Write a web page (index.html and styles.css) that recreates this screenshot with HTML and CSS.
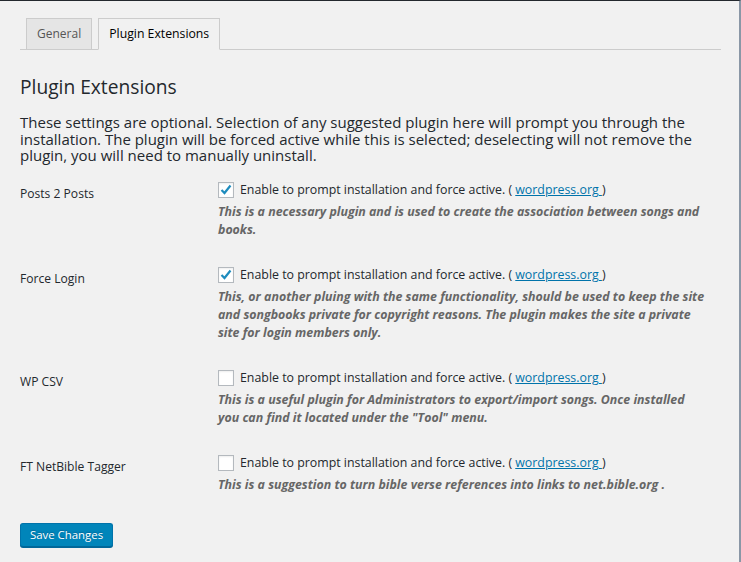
FILE: index.html
```html
<!DOCTYPE html>
<html lang="en">
<head>
<meta charset="utf-8">
<title>Plugin Extensions</title>
<link rel="stylesheet" href="styles.css">
</head>
<body>
<div class="wrap">
  <nav class="tabs">
    <a class="tab" href="#">General</a>
    <a class="tab active" href="#">Plugin Extensions</a>
  </nav>
  <h2 class="title">Plugin Extensions</h2>
  <p class="intro">These settings are optional. Selection of any suggested plugin here will prompt you through the installation. The plugin will be forced active while this is selected; deselecting will not remove the plugin, you will need to manually uninstall.</p>

  <div class="form">
    <div class="row">
      <div class="label">Posts 2 Posts</div>
      <div class="field">
        <label class="opt"><span class="cb"><svg viewBox="0 0 16 16" width="16" height="16"><polyline points="3.5,8 6.5,11 12.5,3.5" /></svg></span><span>Enable to prompt installation and force active. ( <a href="#">wordpress.org </a>)</span></label>
        <p class="desc">This is a necessary plugin and is used to create the association between songs and books.</p>
      </div>
    </div>
    <div class="row">
      <div class="label">Force Login</div>
      <div class="field">
        <label class="opt"><span class="cb"><svg viewBox="0 0 16 16" width="16" height="16"><polyline points="3.5,8 6.5,11 12.5,3.5" /></svg></span><span>Enable to prompt installation and force active. ( <a href="#">wordpress.org </a>)</span></label>
        <p class="desc">This, or another pluing with the same functionality, should be used to keep the site and songbooks private for copyright reasons. The plugin makes the site a private site for login members only.</p>
      </div>
    </div>
    <div class="row">
      <div class="label">WP CSV</div>
      <div class="field">
        <label class="opt"><span class="cb"></span><span>Enable to prompt installation and force active. ( <a href="#">wordpress.org </a>)</span></label>
        <p class="desc">This is a useful plugin for Administrators to export/import songs. Once installed you can find it located under the "Tool" menu.</p>
      </div>
    </div>
    <div class="row">
      <div class="label">FT NetBible Tagger</div>
      <div class="field">
        <label class="opt"><span class="cb"></span><span>Enable to prompt installation and force active. ( <a href="#">wordpress.org </a>)</span></label>
        <p class="desc">This is a suggestion to turn bible verse references into links to net.bible.org .</p>
      </div>
    </div>
  </div>

  <div class="submit"><button class="btn" type="button">Save Changes</button></div>
</div>
</body>
</html>
```

FILE: styles.css
```css
html {
  background: #f1f1f1;
}
body {
  margin: 0;
  min-height: 561px;
  border-top: 1px solid #23282d;
  border-right: 2px solid #8a97a6;
  color: #23282d;
  font-family: "Open Sans", "Noto Sans", sans-serif;
}
.wrap {
  padding: 0 18px 0 20px;
}
.tabs {
  display: flex;
  padding-top: 17px;
  border-bottom: 1px solid #ccc;
}
.tab {
  display: block;
  margin: 0 0 -1px 6px;
  padding: 5px 10px;
  line-height: 20px;
  font-size: 12px;
  color: #555;
  background: #e5e5e5;
  border: 1px solid #ccc;
  text-decoration: none;
}
.tab.active {
  color: #000;
  font-size: 12.25px;
  background: #f1f1f1;
  border-bottom-color: #f1f1f1;
}
.title {
  margin: 23px 0 0;
  font-size: 19.2px;
  line-height: 28px;
  font-weight: 400;
}
.intro {
  margin: 13px 0 0;
  font-size: 15px;
  line-height: 16.5px;
}
.form {
  margin-top: 2px;
}
.row {
  display: grid;
  grid-template-columns: 188px 1fr;
}
.label {
  padding: 18px 10px 0 0;
  font-size: 12.1px;
  line-height: 20px;
}
.field {
  padding: 14px 10px 12px;
}
.opt {
  display: flex;
  align-items: center;
  height: 20px;
  font-size: 12.36px;
}
.cb {
  box-sizing: border-box;
  flex: none;
  width: 16px;
  height: 16px;
  margin-right: 6px;
  background: #fff;
  border: 1px solid #b4b9be;
  box-shadow: inset 0 1px 2px rgba(0,0,0,.07);
  position: relative;
}
.cb svg {
  position: absolute;
  left: -1px;
  top: -1px;
  fill: none;
  stroke: #1e8cbe;
  stroke-width: 2.2;
}
.opt a {
  color: #0073aa;
}
.desc {
  max-width: 488.5px;
  margin: 3px 0 0;
  font-size: 12.4px;
  line-height: 18px;
  font-weight: 700;
  font-style: italic;
  color: #666;
}
.submit {
  display: flex;
  padding-top: 17px;
}
.btn {
  height: 24px;
  padding: 0 9px;
  background: #0085ba;
  border: 1px solid #0073aa;
  border-bottom-color: #006799;
  border-radius: 3px;
  box-shadow: 0 1px 0 #006799;
  color: #fff;
  font-family: inherit;
  font-size: 11.4px;
  line-height: 20px;
  text-shadow: 0 -1px 1px #006799;
}
```
